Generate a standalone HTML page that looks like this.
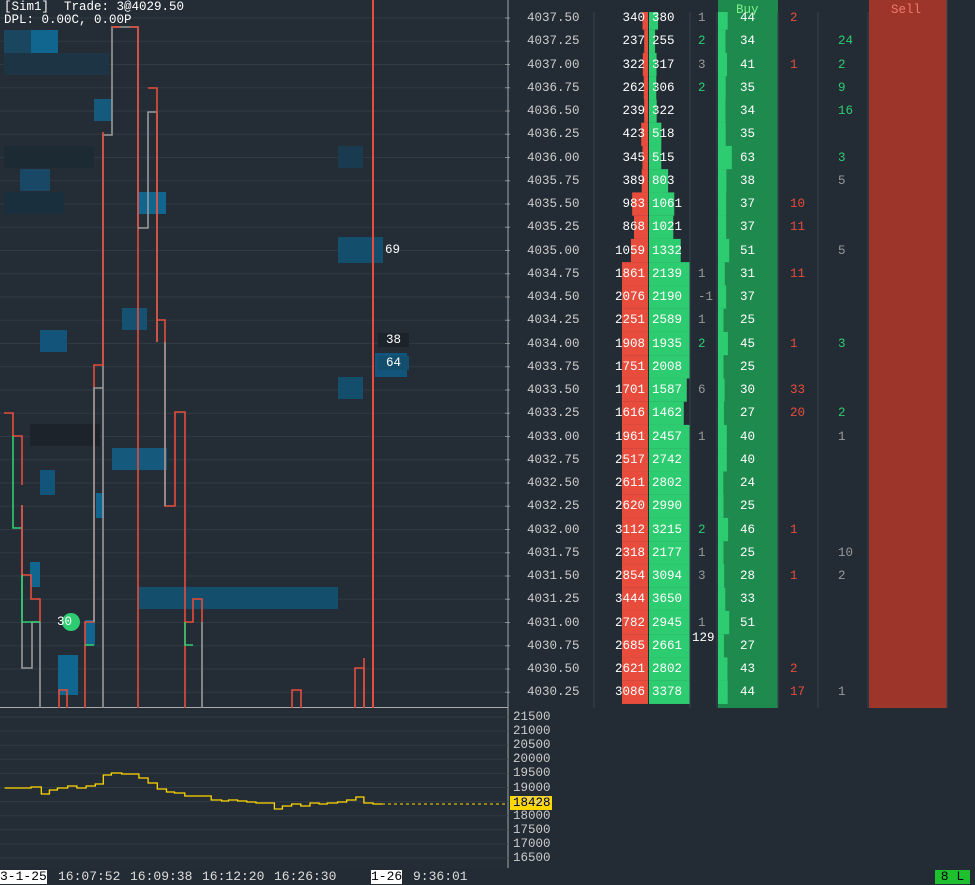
<!DOCTYPE html>
<html><head><meta charset="utf-8"><style>
body{margin:0;width:975px;height:885px;background:#232c34;overflow:hidden;position:relative;font-family:"Liberation Mono",monospace;font-size:12.5px;color:#fff}
.a{position:absolute}
.t{position:absolute;line-height:14px;white-space:pre}
.x{position:absolute;line-height:14px;white-space:pre;font-size:13px;color:#ddd;top:870px}
</style></head><body>
<svg class="a" style="left:0;top:0" width="975" height="885" id="s">
<rect x="0" y="0" width="508" height="868" fill="#242d35"/>
<rect x="718" y="0" width="60" height="708" fill="#1f8a4e"/>
<rect x="869" y="0" width="78" height="708" fill="#9e352a"/>
<g id="g"></g>
</svg>
<div id="d"></div>
<div class="a" style="left:509px;top:0;width:209px;height:12px;background:#232c34"></div>
<div class="a" style="left:718px;top:0;width:60px;height:12px;background:#1f8a4e"></div>
<div class="a" style="left:778px;top:0;width:91px;height:12px;background:#232c34"></div>
<div class="t" style="left:4px;top:0;">[Sim1]  Trade: 3@4029.50</div>
<div class="t" style="left:4px;top:13px;">DPL: 0.00C, 0.00P</div>
<div class="t" style="left:736px;top:3px;color:#7ef08a">Buy</div>
<div class="t" style="left:891px;top:3px;color:#f07a70">Sell</div>
<div class="t" style="left:692px;top:631px">129</div>
<div class="x" style="left:0;background:#fff;color:#000">3-1-25</div>
<div class="x" style="left:58px">16:07:52</div>
<div class="x" style="left:130px">16:09:38</div>
<div class="x" style="left:202px">16:12:20</div>
<div class="x" style="left:274px">16:26:30</div>
<div class="x" style="left:371px;background:#fff;color:#000">1-26</div>
<div class="x" style="left:413px">9:36:01</div>
<div class="x" style="left:935px;background:#1fc02f;color:#000;width:35px;text-align:center">8 L</div>
<script>
var rows=[
["4037.50",340,380,"1",44,"2",""],
["4037.25",237,255,"2",34,"","24"],["4037.00",322,317,"3",41,"1","2"],["4036.75",262,306,"2",35,"","9"],
["4036.50",239,322,"",34,"","16"],["4036.25",423,518,"",35,"",""],["4036.00",345,515,"",63,"","3"],
["4035.75",389,803,"",38,"","5g"],["4035.50",983,1061,"",37,"10",""],["4035.25",868,1021,"",37,"11",""],
["4035.00",1059,1332,"",51,"","5g"],["4034.75",1861,2139,"1",31,"11",""],["4034.50",2076,2190,"-1",37,"",""],
["4034.25",2251,2589,"1",25,"",""],["4034.00",1908,1935,"2",45,"1","3"],["4033.75",1751,2008,"",25,"",""],
["4033.50",1701,1587,"6",30,"33",""],["4033.25",1616,1462,"",27,"20","2"],["4033.00",1961,2457,"1",40,"","1g"],
["4032.75",2517,2742,"",40,"",""],["4032.50",2611,2802,"",24,"",""],["4032.25",2620,2990,"",25,"",""],
["4032.00",3112,3215,"2",46,"1",""],["4031.75",2318,2177,"1",25,"","10g"],["4031.50",2854,3094,"3",28,"1","2g"],
["4031.25",3444,3650,"",33,"",""],["4031.00",2782,2945,"1",51,"",""],["4030.75",2685,2661,"",27,"",""],
["4030.50",2621,2802,"",43,"2",""],["4030.25",3086,3378,"",44,"17","1g"]];
var h="",g="";
var lines="#2f3a44";
for(var i=0;i<rows.length;i++){var r=rows[i];var cy=18+23.25*i,ty=cy-11.6;
 var bw=Math.min(26,r[1]/62),aw=Math.min(41,r[2]/42);
 g+='<rect x="'+(648-bw)+'" y="'+ty+'" width="'+bw+'" height="23.3" fill="#e74c3c"/>';
 g+='<rect x="649" y="'+ty+'" width="'+aw+'" height="23.3" fill="#2ecc71"/>';
 g+='<rect x="718" y="'+ty+'" width="'+(r[4]*0.22)+'" height="23.3" fill="#2ecc71"/>';
 g+='<line x1="0" x2="508" y1="'+cy+'" y2="'+cy+'" stroke="'+lines+'"/>';
 g+='<line x1="505" x2="510" y1="'+cy+'" y2="'+cy+'" stroke="#888"/>';
 var y=cy-7;
 h+='<div class="t" style="left:527px;top:'+y+'px;color:#ccc">'+r[0]+'</div>';
 h+='<div class="t" style="right:'+(975-645)+'px;top:'+y+'px">'+r[1]+'</div>';
 h+='<div class="t" style="left:652px;top:'+y+'px">'+r[2]+'</div>';
 h+='<div class="t" style="left:698px;top:'+y+'px;color:'+(r[3]=="2"?"#2ecc71":"#999")+'">'+r[3]+'</div>';
 h+='<div class="t" style="left:740px;top:'+y+'px">'+r[4]+'</div>';
 h+='<div class="t" style="left:790px;top:'+y+'px;color:#e74c3c">'+r[5]+'</div>';
 var gc=r[6].indexOf("g")>0?"#999":"#2ecc71";
 h+='<div class="t" style="left:838px;top:'+y+'px;color:'+gc+'">'+r[6].replace("g","")+'</div>';
}
[594,690,717,778,818,868,947].forEach(function(x){g+='<line x1="'+x+'" x2="'+x+'" y1="0" y2="708" stroke="#36424d"/>';});
g+='<line x1="508" x2="508" y1="0" y2="868" stroke="#9aa"/><line x1="0" x2="508" y1="707.5" y2="707.5" stroke="#aaa"/>';
for(var v=0;v<11;v++){var yy=717+v*14.1;g+='<line x1="0" x2="508" y1="'+yy+'" y2="'+yy+'" stroke="'+lines+'"/>';
 h+='<div class="t" style="left:513px;top:'+(yy-7)+'px;color:#ccc">'+(21500-v*500)+'</div>';}
var blues=[[4,30,27,45,"#1a4660"],[31,30,27,45,"#11668f"],[4,53,105,22,"#1d3444"],[94,99,18,22,"#155a7c"],[4,146,90,22,"#1c2a33"],[20,169,30,22,"#184866"],
[4,192,60,22,"#1a2f3e"],[138,192,28,22,"#11668f"],[40,330,27,22,"#13557a"],[122,308,25,22,"#155170"],[112,448,55,22,"#155a7c"],[138,587,200,22,"#134e6c"],
[338,146,25,22,"#1a3a50"],[338,237,45,26,"#134e6c"],[338,377,25,22,"#134e6c"],[375,353,32,24,"#13557a"],[30,424,70,22,"#1c232a"],[58,655,20,40,"#11668f"],
[85,620,10,25,"#11668f"],[96,493,8,25,"#11668f"],[40,470,15,25,"#13557a"],[30,562,10,25,"#11668f"]];
blues.forEach(function(b){g+='<rect x="'+b[0]+'" y="'+b[1]+'" width="'+b[2]+'" height="'+b[3]+'" fill="'+b[4]+'"/>';});
g+='<line x1="373" x2="373" y1="0" y2="708" stroke="#e74c3c" stroke-width="2"/>';
var R="#e74c3c",G="#2ecc71",W="#999";
function p(d,c){g+='<path d="'+d+'" fill="none" stroke="'+c+'" stroke-width="1.6"/>';}
p("M103 708V135H112V27H138V228",W);p("M112 27H120",R);p("M130 27H138V708",R);p("M138 228H148V112H157V342",W);p("M148 88H157V342",R);
p("M157 320H165V506H175V412H185V708",R);p("M165 342V506",W);p("M4 413H13V436H22V485",R);p("M13 436V528H22",G);p("M22 505V668H32V622H40V708",W);
p("M22 505V575H31V599H40V622",R);p("M22 575V622H40",G);p("M85 708V622H94V365H103V132",R);p("M94 622V388H103",W);p("M94 645H85",G);
p("M185 622H193V599H202V622",R);p("M185 622V645H193",G);p("M202 622V708",W);p("M59 708V690H67V708",R);p("M292 708V690H301V708",R);
p("M355 708V668H364V708",R);p("M364 658V708",R);
g+='<circle cx="71" cy="622" r="9" fill="#2ecc71"/>';
h+='<div class="t" style="left:57px;top:615px">30</div>';
h+='<div class="t" style="left:385px;top:243px">69</div><div class="t" style="left:378px;top:333px;background:#1c232a;padding:0 8px">38</div><div class="t" style="left:378px;top:356px;background:#134e6c;padding:0 8px">64</div>';
var pts="4,788 27,788 27,787 36,787 36,794 43,794 43,790 50,790 50,788 59,788 59,786 67,786 67,788 75,788 75,786 83,786 83,784 90,784 90,775 97,775 97,773 106,773 106,774 121,774 121,778 129,778 129,783 137,783 137,789 145,789 145,792 152,792 152,793 161,793 161,796 184,796 184,800 193,800 193,801 199,801 199,800 207,800 207,801 215,801 215,802 223,802 223,803 239,803 239,809 246,809 246,806 254,806 254,804 262,804 262,806 270,806 270,803 278,803 278,804 285,804 285,803 294,803 294,802 302,802 302,800 310,800 310,797 317,797 317,803 325,803 325,804 333,804";
pts=pts.split(" ").map(function(s){var a=s.split(",");return (a[0]*1.148).toFixed(1)+","+a[1];}).join(" ");
g+='<polyline fill="none" stroke="#ffd700" stroke-width="1.3" points="'+pts+'"/>';
g+='<line x1="382" x2="508" y1="804" y2="804" stroke="#ffd700" stroke-dasharray="3,3"/>';
g+='<rect x="510" y="796" width="42" height="14" fill="#ffd700"/>';
document.getElementById("g").innerHTML=g;document.getElementById("d").innerHTML=h;
</script>
<div class="t" style="left:513px;top:796px;color:#000">18428</div>
</body></html>
